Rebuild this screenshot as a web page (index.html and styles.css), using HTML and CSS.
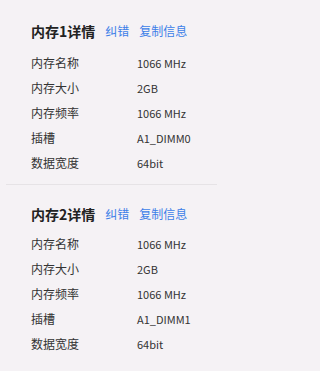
FILE: index.html
```html
<!DOCTYPE html>
<html lang="zh-CN">
<head>
<meta charset="utf-8">
<link rel="stylesheet" href="styles.css">
</head>
<body>
<div class="panel">
  <section class="section section-first">
    <div class="head">
      <span class="title">内存1详情</span>
      <a class="link">纠错</a>
      <a class="link">复制信息</a>
    </div>
    <dl class="rows">
      <dt>内存名称</dt><dd>1066 MHz</dd>
      <dt>内存大小</dt><dd>2GB</dd>
      <dt>内存频率</dt><dd>1066 MHz</dd>
      <dt>插槽</dt><dd>A1_DIMM0</dd>
      <dt>数据宽度</dt><dd>64bit</dd>
    </dl>
  </section>
  <div class="divider"></div>
  <section class="section section-next">
    <div class="head">
      <span class="title">内存2详情</span>
      <a class="link">纠错</a>
      <a class="link">复制信息</a>
    </div>
    <dl class="rows">
      <dt>内存名称</dt><dd>1066 MHz</dd>
      <dt>内存大小</dt><dd>2GB</dd>
      <dt>内存频率</dt><dd>1066 MHz</dd>
      <dt>插槽</dt><dd>A1_DIMM1</dd>
      <dt>数据宽度</dt><dd>64bit</dd>
    </dl>
  </section>
</div>
</body>
</html>
```
FILE: styles.css
```css
html, body {
  margin: 0;
  padding: 0;
  background: #f5f2f5;
}
body {
  width: 217px;
  height: 371px;
  overflow: hidden;
  font-family: "Noto Sans CJK SC", "Noto Sans", sans-serif;
  color: #2b2b2b;
}
.section {
  padding-left: 31px;
}
.section-first {
  padding-top: 21px;
  padding-bottom: 9px;
}
.section-next {
  padding-top: 19px;
}
.head {
  display: flex;
  align-items: center;
  height: 20px;
  gap: 10px;
}
.section-first .head { margin-bottom: 9px; }
.section-next .head { margin-bottom: 7px; }
.title {
  font-size: 14px;
  font-weight: 700;
  color: #222;
  line-height: 20px;
}
.link {
  font-size: 12px;
  color: #3d7fe8;
  line-height: 20px;
  cursor: pointer;
}
.rows {
  margin: 0;
  display: grid;
  grid-template-columns: 106px auto;
  grid-auto-rows: 25px;
  align-items: center;
}
.rows dt {
  font-size: 12px;
  color: #333;
  margin: 0;
}
.rows dd {
  font-size: 11px;
  color: #333;
  margin: 0;
}
.divider {
  height: 1px;
  margin-left: 6px;
  background: #e6e3e6;
}
```
